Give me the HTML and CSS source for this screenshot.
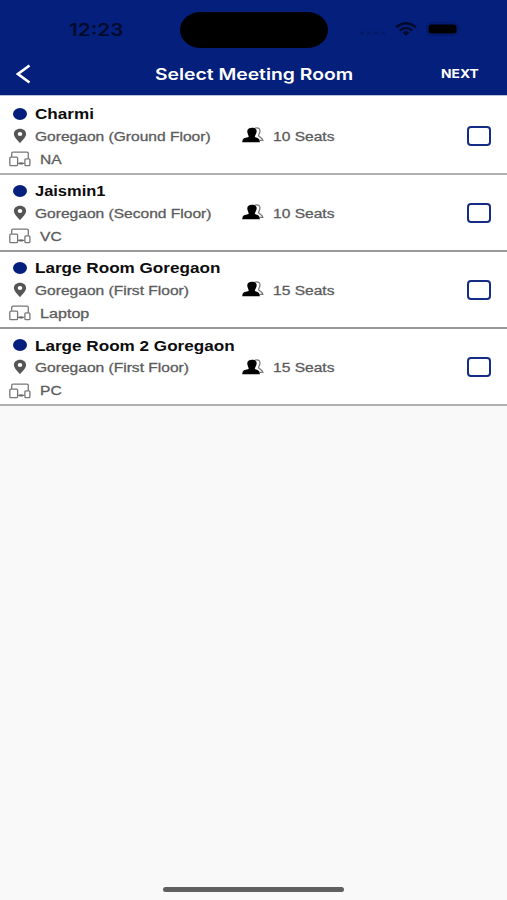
FILE: index.html
```html
<!DOCTYPE html>
<html lang="en">
<head>
<meta charset="utf-8">
<title>Select Meeting Room</title>
<link rel="stylesheet" href="styles.css">
</head>
<body>
<svg class="defs" aria-hidden="true">
  <symbol id="pin" viewBox="0 0 14 16"><path fill="#555" fill-rule="evenodd" d="M7 .8C3.200.8.9 3.100.9 6 .9 9.200 4.600 12.200 7 15.200 9.400 12.200 13.100 9.200 13.100 6 13.100 3.100 10.800.8 7 .8ZM7 3.900a2.300 2.100 0 1 1 0 4.200 2.300 2.100 0 0 1 0-4.200Z"/></symbol>
  <symbol id="devices" viewBox="0 0 22 16"><g fill="none" stroke="#777" stroke-width="1.300"><path d="M2.700 5.800V2.200Q2.700 1.100 4 1.100H18Q19.300 1.100 19.300 2.200V7.500M8.800 12.300H15.500"/><rect x=".8" y="6.200" width="7.800" height="8.500" rx="1"/><rect x="15.900" y="7.800" width="5" height="6.900" rx="1"/></g><path fill="#666" d="M10.300 11.500h3.500v2h-3.500z"/></symbol>
  <symbol id="people" viewBox="0 0 22 16"><path fill="none" stroke="#777" stroke-width="1.200" d="M13 1.200C16.500.2 18.400 1.800 17.900 4.600 17.700 6.600 16.600 7.400 16.600 8.600 16.800 9.900 20.800 11.200 20.900 13.300H18"/><path d="M10 .7C13.500.7 15 2.200 14.600 5 14.400 6.900 12.900 8 12.900 10L16.100 11.300Q17.900 12.200 17.900 15.300H.2Q.2 12.200 2 11.300L6.700 10C6.700 8 5.500 6.900 5.300 5 5 2.200 6.800.7 10 .7Z"/></symbol>
</svg>
<header class="header">
  <div class="status">
    <span class="time">12:23</span>
    <span class="island"></span>
    <span class="signals">
      <svg class="dots" viewBox="0 0 26 6"><path stroke="#041657" stroke-width="3" stroke-dasharray="4 3" d="M0 3H25"/></svg>
      <svg class="wifi" viewBox="0 0 22 14"><g fill="none" stroke="#000b2b" stroke-width="2.400"><path d="M1 5.200Q11-2.800 21 5.200"/><path d="M4.700 8.500Q11 3.300 17.300 8.500"/></g><path fill="#000b2b" d="M7.500 10.600Q11 8 14.500 10.600L11 13.700Z"/></svg>
      <svg class="battery" viewBox="0 0 37 14"><rect x=".8" y=".8" width="31.400" height="12.400" rx="4" fill="none" stroke="#041866"/><rect x="2.500" y="2.500" width="28" height="9" rx="2.500"/><path fill="#041866" d="M34 5q2 2 0 4z"/></svg>
    </span>
  </div>
  <nav class="nav">
    <svg class="back" viewBox="0 0 15 20"><path fill="none" stroke="#fff" stroke-width="2.600" d="M13.500 1.500 2 10 13.500 18.500"/></svg>
    <h1 class="title">Select Meeting Room</h1>
    <span class="next">NEXT</span>
  </nav>
</header>
<main class="rooms">
  <section class="room">
    <div class="name"><i class="dot"></i><b>Charmi</b></div>
    <div class="place"><svg class="pin"><use href="#pin"/></svg><span class="label">Goregaon (Ground Floor)</span></div>
    <div class="seats"><svg class="people"><use href="#people"/></svg><span class="label">10 Seats</span></div>
    <div class="kit"><svg class="devices"><use href="#devices"/></svg><span class="label">NA</span></div>
    <i class="check"></i>
  </section>
  <section class="room">
    <div class="name"><i class="dot"></i><b class="narrow">Jaismin1</b></div>
    <div class="place"><svg class="pin"><use href="#pin"/></svg><span class="label">Goregaon (Second Floor)</span></div>
    <div class="seats"><svg class="people"><use href="#people"/></svg><span class="label">10 Seats</span></div>
    <div class="kit"><svg class="devices"><use href="#devices"/></svg><span class="label">VC</span></div>
    <i class="check"></i>
  </section>
  <section class="room">
    <div class="name"><i class="dot"></i><b>Large Room Goregaon</b></div>
    <div class="place"><svg class="pin"><use href="#pin"/></svg><span class="label">Goregaon (First Floor)</span></div>
    <div class="seats"><svg class="people"><use href="#people"/></svg><span class="label">15 Seats</span></div>
    <div class="kit"><svg class="devices"><use href="#devices"/></svg><span class="label wide">Laptop</span></div>
    <i class="check"></i>
  </section>
  <section class="room">
    <div class="name"><i class="dot"></i><b>Large Room 2 Goregaon</b></div>
    <div class="place"><svg class="pin"><use href="#pin"/></svg><span class="label">Goregaon (First Floor)</span></div>
    <div class="seats"><svg class="people"><use href="#people"/></svg><span class="label">15 Seats</span></div>
    <div class="kit"><svg class="devices"><use href="#devices"/></svg><span class="label">PC</span></div>
    <i class="check"></i>
  </section>
</main>
<footer class="home"><span class="bar"></span></footer>
</body>
</html>
```
FILE: styles.css
```css
* { box-sizing: border-box; }
body {
  margin: 0;
  height: 900px;
  display: flex;
  flex-direction: column;
  background: #f9f9f9;
  font-family: "Liberation Sans", Arial, sans-serif;
  overflow: hidden;
}
svg { display: block; flex: none; }
.defs { position: absolute; width: 0; height: 0; }

.header {
  height: 96px;
  flex: none;
  background: #051f7c;
  border-bottom: 1px solid #b9c1df;
  font-family: Inter, sans-serif;
}
.status {
  height: 53px;
  padding-top: 6px;
  display: grid;
  grid-template-columns: 180px 148px 1fr;
  align-items: center;
}
.time {
  justify-self: start;
  margin-left: 69px;
  color: #000b2b;
  font-size: 17px;
  font-weight: 600;
  transform: scaleX(1.22);
  transform-origin: left;
}
.island { height: 36px; border-radius: 21px / 18px; background: #000; }
.signals { display: flex; align-items: center; padding-left: 32px; margin-top: -2px; }
.dots { width: 26px; height: 6px; margin-top: 8px; opacity: .5; }
.wifi { width: 22px; height: 14px; margin-left: 9px; }
.battery { width: 37px; height: 14px; margin-left: 9px; }

.nav {
  height: 42px;
  display: grid;
  grid-template-columns: 155px 286px 1fr;
  align-items: center;
  color: #fff;
}
.back { width: 15px; height: 20px; margin-left: 16px; }
.title {
  margin: 0;
  justify-self: start;
  font-size: 16px;
  font-weight: 600;
  white-space: nowrap;
  transform: scaleX(1.208);
  transform-origin: left;
}
.next {
  justify-self: start;
  margin-top: -1px;
  font-size: 12px;
  font-weight: 700;
  transform: scaleX(1.15);
  transform-origin: left;
}

.rooms { flex: none; padding-top: 1.500px; background: #fff; }
.room {
  height: 77.200px;
  padding-top: 5.500px;
  display: grid;
  grid-template-columns: 242px 225px 1fr;
  grid-template-rows: 22px 23px 23px;
  align-items: center;
  background: #fff;
  border-bottom: 2px solid #b0b0b0;
}
.room:nth-child(2), .room:nth-child(3) { border-bottom-color: #999; }
.name, .place, .seats, .kit { display: flex; align-items: center; }
.name { grid-area: 1 / 1 / 2 / 3; }
.place { grid-area: 2 / 1; }
.seats { grid-area: 2 / 2; }
.kit { grid-area: 3 / 1; }
.name b {
  font-size: 14px;
  color: #0c0c0c;
  white-space: nowrap;
  transform: scaleX(1.222);
  transform-origin: left;
}
.name b.narrow { transform: scaleX(1.175); }
.label {
  font-size: 12.500px;
  color: #5c5c5c;
  -webkit-text-stroke: .3px #5c5c5c;
  white-space: nowrap;
  transform: scaleX(1.245);
  transform-origin: left;
}
.label.wide { transform: scaleX(1.290); }
.dot { width: 14px; height: 12px; margin: -1px 8px 0 13px; border-radius: 50%; background: #051f7c; }
.pin { width: 14px; height: 16px; margin: -2px 8px 0 13px; }
.devices { width: 22px; height: 16px; margin: -1px 9px 0; }
.people { width: 22px; height: 16px; margin: -3px 9px 0 0; }
.check {
  grid-area: 2 / 3;
  width: 24px;
  height: 20px;
  margin-top: -2px;
  border: 2px solid #142c84;
  border-radius: 4px;
}

.home { margin-top: auto; height: 14px; display: flex; justify-content: center; }
.bar { width: 181px; height: 5px; margin-top: 1px; border-radius: 3px; background: #606060; }
```
